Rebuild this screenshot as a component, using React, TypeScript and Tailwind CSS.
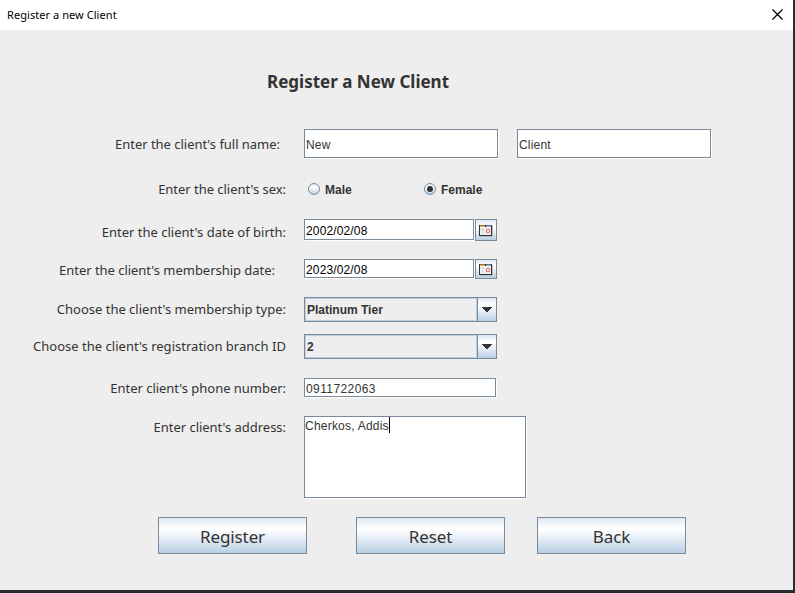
import type { ReactNode } from "react";

const field =
  "flex items-center border border-[#7a8a99] bg-white pl-px text-[12px] leading-none shadow-[1px_1px_0_#fff] outline-none font-['Liberation_Sans',Arial,sans-serif]";
const metal =
  "bg-[linear-gradient(180deg,#dde8f3_0%,#ffffff_30%,#ffffff_34%,#b8cfe5_100%)]";

function Row({ label, top, height, labelClass, children }: {
  label: string;
  top: string;
  height: string;
  labelClass: string;
  children: ReactNode;
}) {
  return (
    <div className={`flex ${top} ${height}`}>
      <div className={`w-[304px] shrink-0 whitespace-nowrap text-right text-[13px] leading-5 ${labelClass}`}>
        {label}
      </div>
      {children}
    </div>
  );
}

function Calendar() {
  return (
    <svg width="14" height="12" viewBox="0 0 14 12" className="mt-px">
      <path d="M1 1h13v11H1z" fill="#b9bcc0" />
      <path d="M0 0h13v11H0z" fill="#333333" />
      <path d="M1 2h11v8H1z" fill="#f0f0f0" />
      <path d="M1 .5h5v1.5H1z" fill="#f0b040" />
      <path d="M7 .5h5v1.5H7z" fill="#8fb4dc" />
      <path d="M3.5 3v7M1 4.5h5" stroke="#dcdcdc" fill="none" />
      <circle cx="9" cy="6" r="1.7" stroke="#e8797b" strokeWidth="1.2" fill="#fff" />
    </svg>
  );
}

function DateField({ value, fieldHeight, buttonHeight }: { value: string; fieldHeight: string; buttonHeight: string }) {
  return (
    <>
      <div className={`${field} ${fieldHeight} w-[170px] text-black`}>
        <span className="tracking-[0.14px]">{value}</span>
      </div>
      <button className={`${metal} ${buttonHeight} ml-px flex w-[22px] items-center justify-center border border-[#7a8a99]`}>
        <Calendar />
      </button>
    </>
  );
}

function Combo({ value }: { value: string }) {
  return (
    <div className="flex h-[25px] w-[193px] border border-[#7a8a99] font-['Liberation_Sans',Arial,sans-serif] text-[12px] font-bold">
      <div className="flex flex-1 items-center border border-[#b8cfe5] pl-px">{value}</div>
      <div className={`${metal} flex w-[19px] items-center justify-center border-l border-[#7a8a99]`}>
        <svg width="10" height="5" viewBox="0 0 10 5" shapeRendering="crispEdges">
          <path d="M0 0h10v1H9v1H8v1H7v1H6v1H4V4H3V3H2V2H1V1H0z" fill="#333" />
        </svg>
      </div>
    </div>
  );
}

function Radio({ checked = false }: { checked?: boolean }) {
  return (
    <span className={`${metal} flex size-[12px] items-center justify-center rounded-full border border-[#7a8a99]`}>
      {checked && <span className="size-[6px] rounded-full bg-[#333]" />}
    </span>
  );
}

function Action({ children, className }: { children: string; className: string }) {
  return (
    <button className={`${metal} h-[37px] w-[149px] border border-[#7a8a99] pt-px text-[17px] leading-none tracking-[-0.1px] ${className}`}>
      {children}
    </button>
  );
}

export default function App() {
  return (
    <div className="h-[593px] w-[795px] overflow-hidden border-b-[3px] border-r-2 border-[#262d33] bg-[#eeeeee] font-['Noto_Sans',sans-serif] text-[#333]">
      <header className="flex h-[30px] items-center justify-between bg-white pl-[7px] pr-[10px] text-black">
        <span className="pb-[2px] text-[11px] leading-none tracking-[0.06px]">Register a new Client</span>
        <svg width="11" height="11" viewBox="0 0 11 11" className="mb-[2px]">
          <path d="M.5 .5l10 10M10.5 .5l-10 10" stroke="#000" strokeWidth="1.25" fill="none" />
        </svg>
      </header>
      <main>
        <h1 className="ml-[267px] pt-[40px] text-[17px] font-bold leading-6">Register a New Client</h1>
        <Row label="Enter the client's full name:" top="mt-[35px]" height="h-[29px]" labelClass="pr-[24px] pt-[5px] tracking-[-0.03px]">
          <div className={`${field} w-[194px] pt-[3px]`}><span className="tracking-[0.2px]">New</span></div>
          <div className={`${field} ml-[19px] w-[194px] pt-[3px]`}><span className="tracking-[0.2px]">Client</span></div>
        </Row>
        <Row label="Enter the client's sex:" top="mt-[21px]" height="h-[20px]" labelClass="pr-[18px] tracking-[-0.03px]">
          <div className="flex items-center pl-1 font-['Liberation_Sans',Arial,sans-serif] text-[12px] font-bold">
            <div className="flex w-[116px] items-center gap-[5px]"><Radio /><span className="pt-px">Male</span></div>
            <div className="flex items-center gap-[5px]"><Radio checked /><span className="pt-px">Female</span></div>
          </div>
        </Row>
        <Row label="Enter the client's date of birth:" top="mt-[20px]" height="h-[22px]" labelClass="pr-[18px] pt-[3px]">
          <DateField value="2002/02/08" fieldHeight="h-[21px] pt-[2px]" buttonHeight="h-[22px]" />
        </Row>
        <Row label="Enter the client's membership date:" top="mt-[18px]" height="h-[20px]" labelClass="pr-[29px] pt-px tracking-[-0.03px]">
          <DateField value="2023/02/08" fieldHeight="h-[19px] pt-[2px]" buttonHeight="h-[20px]" />
        </Row>
        <Row label="Choose the client's membership type:" top="mt-[18px]" height="h-[25px]" labelClass="pr-[18px] pt-[2px]">
          <Combo value="Platinum Tier" />
        </Row>
        <Row label="Choose the client's registration branch ID" top="mt-[12px]" height="h-[25px]" labelClass="pr-[18px] pt-[2px] tracking-[0.02px]">
          <Combo value="2" />
        </Row>
        <Row label="Enter client's phone number:" top="mt-[19px]" height="h-[19px]" labelClass="pr-[18px] tracking-[-0.03px]">
          <div className={`${field} w-[192px] pt-[3px]`}><span className="tracking-[0.4px]">0911722063</span></div>
        </Row>
        <Row label="Enter client's address:" top="mt-[19px]" height="h-[82px]" labelClass="pr-[18px] pt-[1px] tracking-[-0.03px]">
          <div className="w-[222px] border border-[#7a8a99] bg-white font-['Liberation_Sans',Arial,sans-serif] text-[12px] leading-4 shadow-[1px_1px_0_#fff]">
            <span className="inline-block h-4 border-r border-black pt-px tracking-[0.22px]">Cherkos, Addis</span>
          </div>
        </Row>
        <div className="ml-[158px] mt-[19px] flex">
          <Action className="">Register</Action>
          <Action className="ml-[49px]">Reset</Action>
          <Action className="ml-[32px]">Back</Action>
        </div>
      </main>
    </div>
  );
}
